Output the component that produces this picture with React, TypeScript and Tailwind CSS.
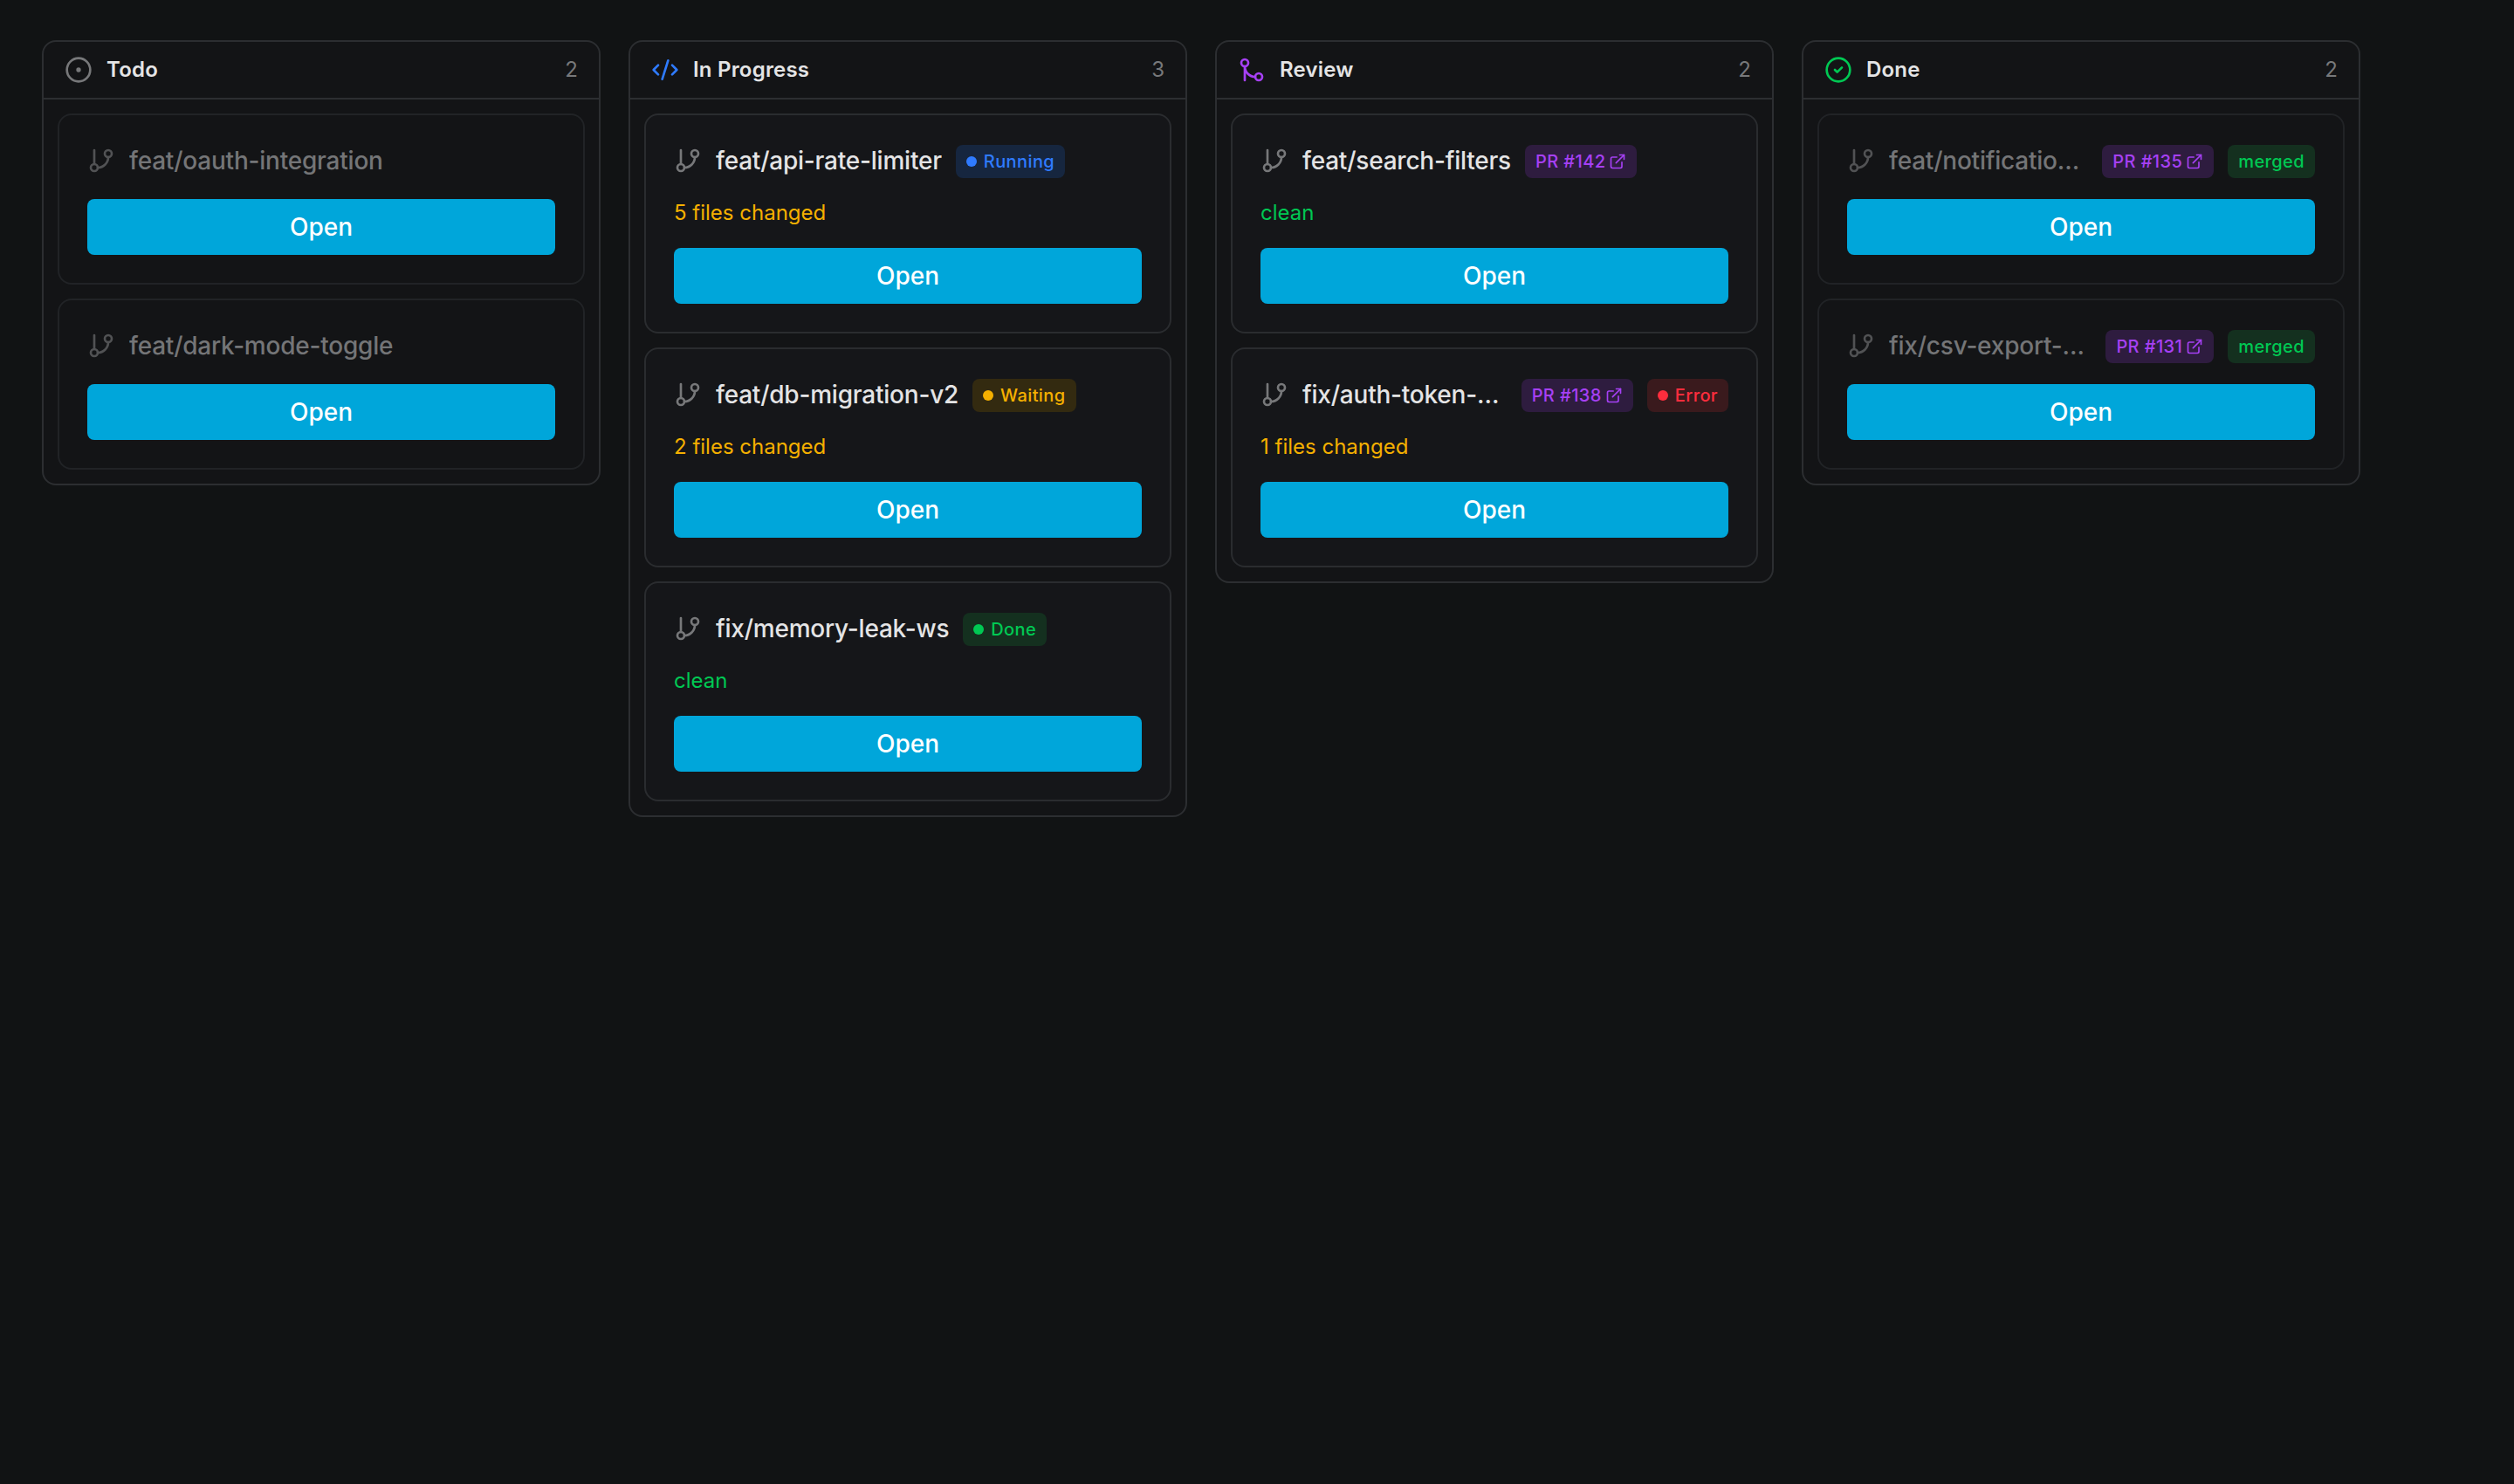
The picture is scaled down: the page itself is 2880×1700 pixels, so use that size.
import React from "react";
import { CircleCheck, CircleDot, CodeXml, ExternalLink, GitMerge } from "lucide-react";

type Status = "Running" | "Waiting" | "Done" | "Error";

type Task = {
  branch: string;
  pr?: number;
  status?: Status;
  merged?: boolean;
  files?: number;
};

type Column = {
  title: string;
  icon: React.ReactNode;
  muted?: boolean;
  tasks: Task[];
};

const columns: Column[] = [
  {
    title: "Todo",
    icon: <CircleDot className="size-8 shrink-0 text-[#77787a]" />,
    muted: true,
    tasks: [{ branch: "feat/oauth-integration" }, { branch: "feat/dark-mode-toggle" }],
  },
  {
    title: "In Progress",
    icon: <CodeXml className="size-8 shrink-0 text-[#2f7bff]" />,
    tasks: [
      { branch: "feat/api-rate-limiter", status: "Running", files: 5 },
      { branch: "feat/db-migration-v2", status: "Waiting", files: 2 },
      { branch: "fix/memory-leak-ws", status: "Done", files: 0 },
    ],
  },
  {
    title: "Review",
    icon: <GitMerge className="size-8 shrink-0 text-[#a640f5]" />,
    tasks: [
      { branch: "feat/search-filters", pr: 142, files: 0 },
      { branch: "fix/auth-token-expiry", pr: 138, status: "Error", files: 1 },
    ],
  },
  {
    title: "Done",
    icon: <CircleCheck className="size-8 shrink-0 text-[#00c853]" />,
    muted: true,
    tasks: [
      { branch: "feat/notification-center", pr: 135, merged: true },
      { branch: "fix/csv-export-encoding", pr: 131, merged: true },
    ],
  },
];

const statusStyles: Record<Status, { badge: string; dot: string }> = {
  Running: { badge: "bg-[#16263f] text-[#2f7bff]", dot: "bg-[#2f7bff]" },
  Waiting: { badge: "bg-[#332a10] text-[#f5b000]", dot: "bg-[#f5b000]" },
  Done: { badge: "bg-[#14301f] text-[#00c853]", dot: "bg-[#00c853]" },
  Error: { badge: "bg-[#3a1a1d] text-[#ff2d3d]", dot: "bg-[#ff2d3d]" },
};

const BranchIcon = ({ className }: { className: string }) => (
  <svg
    viewBox="0 0 24 24"
    fill="none"
    stroke="currentColor"
    strokeWidth="2"
    strokeLinecap="round"
    strokeLinejoin="round"
    className={className}
  >
    <line x1="6" y1="3" x2="6" y2="15" />
    <circle cx="18" cy="6" r="3" />
    <circle cx="6" cy="18" r="3" />
    <path d="M18 9a9 9 0 0 1-9 9" />
  </svg>
);

const TaskCard = ({ task, muted }: { task: Task; muted?: boolean }) => (
  <div
    className={`flex flex-col gap-6 rounded-2xl border-2 p-8 ${
      muted ? "border-[#212326] bg-[#131416]" : "border-[#2a2c2f] bg-[#151619]"
    }`}
  >
    <div className="flex h-10 items-center gap-4">
      <BranchIcon className={`size-8 shrink-0 ${muted ? "text-[#515254]" : "text-[#77787a]"}`} />
      <span
        className={`min-w-0 truncate text-[28px] leading-10 font-medium tracking-[-0.22px] ${
          muted ? "text-[#747577]" : "text-[#e4e4e5]"
        }`}
      >
        {task.branch}
      </span>
      {task.pr && (
        <span className="mt-0.5 flex h-[38px] shrink-0 items-center gap-1 rounded-lg bg-[#2e1c3f] px-3 text-[20px] font-medium tracking-[0.4px] text-[#a640f5]">
          PR #{task.pr}
          <ExternalLink className="size-5" />
        </span>
      )}
      {task.status && (
        <span
          className={`mt-0.5 flex h-[38px] shrink-0 items-center gap-2 rounded-lg px-3 text-[20px] font-medium tracking-[0.4px] ${statusStyles[task.status].badge}`}
        >
          <span className={`size-3 rounded-full ${statusStyles[task.status].dot}`} />
          {task.status}
        </span>
      )}
      {task.merged && (
        <span className="mt-0.5 flex h-[38px] shrink-0 items-center rounded-lg bg-[#14301f] px-3 text-[20px] font-medium tracking-[0.4px] text-[#00c853]">
          merged
        </span>
      )}
    </div>
    {task.files !== undefined && (
      <p className={`text-[24px] leading-8 ${task.files > 0 ? "text-[#f5b000]" : "text-[#00c853]"}`}>
        {task.files > 0 ? `${task.files} files changed` : "clean"}
      </p>
    )}
    <button className="h-16 rounded-lg bg-[#00a6da] text-[28px] font-medium text-white">Open</button>
  </div>
);

export default function App() {
  return (
    <div className="flex min-h-screen items-start gap-8 bg-[#111314] px-12 pt-[46px] font-['Inter',sans-serif]">
      {columns.map((col) => (
        <section key={col.title} className="w-[640px] shrink-0 rounded-2xl border-2 border-[#2c2e31] bg-[#131416]">
          <header className="flex h-[66px] items-center gap-4 border-b-2 border-[#2c2e31] px-6">
            {col.icon}
            <h2 className="flex-1 text-[24px] font-semibold tracking-[0.2px] text-[#e4e4e5]">{col.title}</h2>
            <span className="text-[24px] text-[#77787a]">{col.tasks.length}</span>
          </header>
          <div className="flex flex-col gap-4 p-4">
            {col.tasks.map((task) => (
              <TaskCard key={task.branch} task={task} muted={col.muted} />
            ))}
          </div>
        </section>
      ))}
    </div>
  );
}
